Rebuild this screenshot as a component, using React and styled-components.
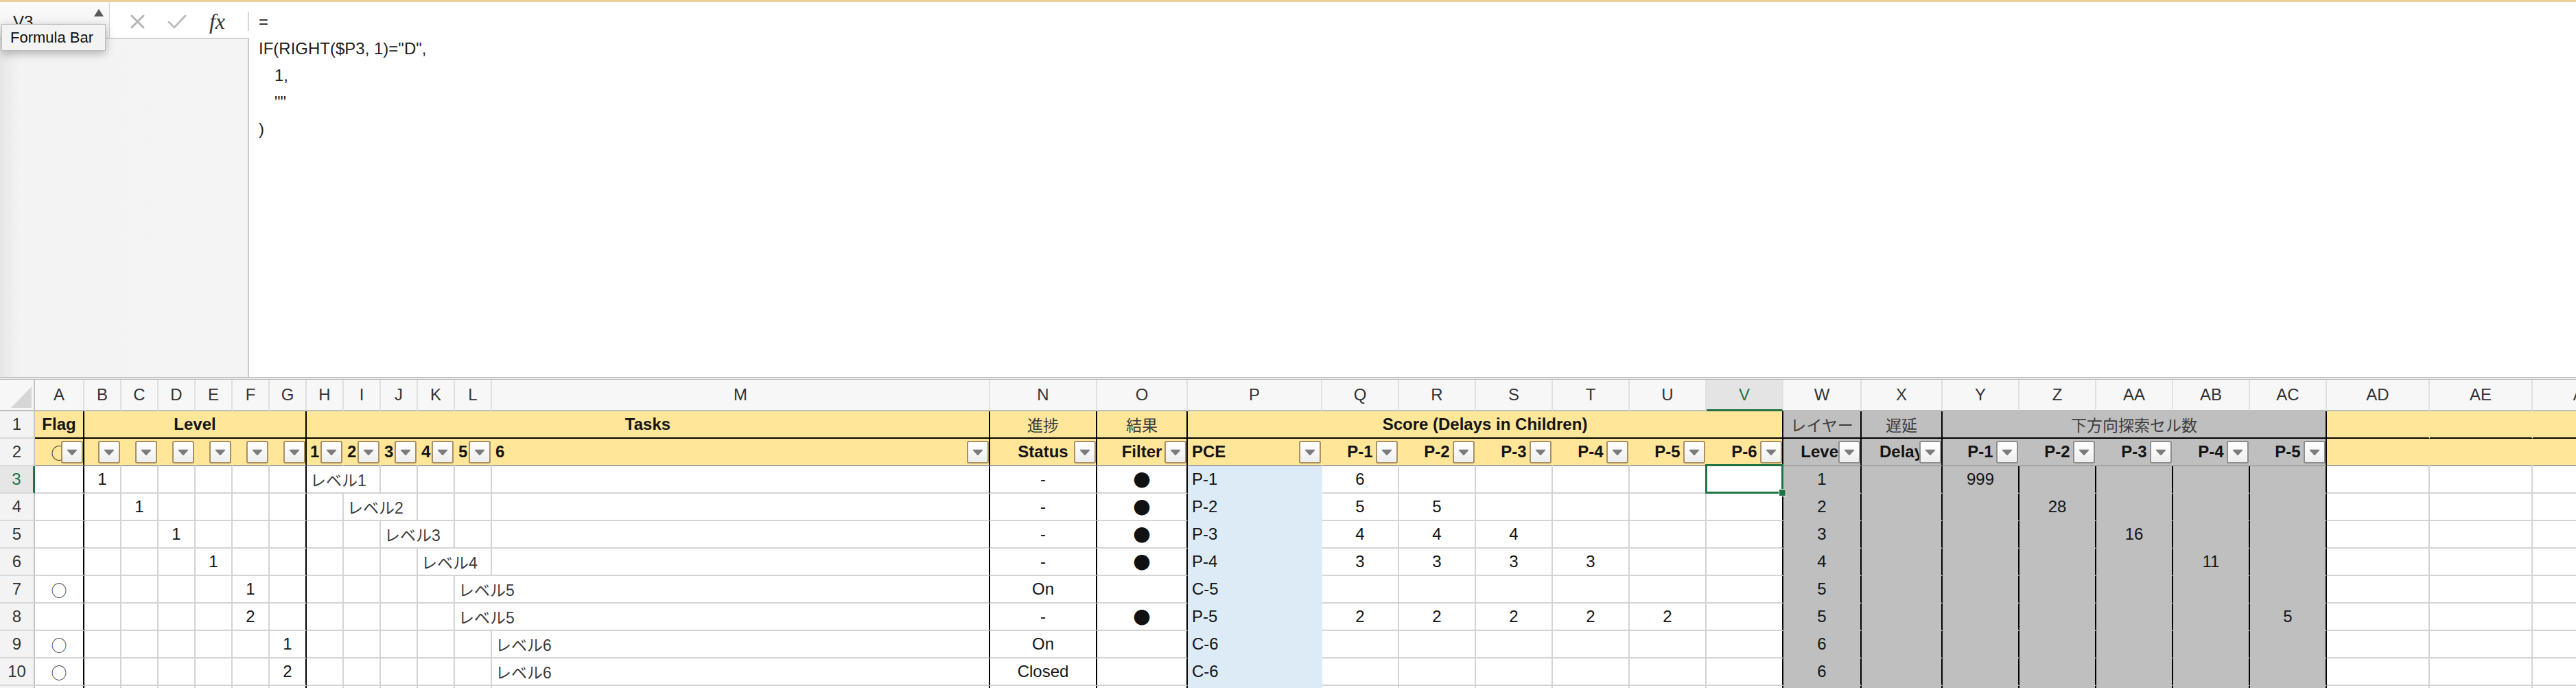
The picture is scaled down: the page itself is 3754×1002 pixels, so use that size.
import React from 'react';
import styled, { createGlobalStyle } from 'styled-components';

const YELLOW = '#ffe699';
const GRAY = '#bfbfbf';
const BLUE = '#ddebf7';
const WHITE = '#ffffff';
const GRID = '#d4d4d4';
const BLACK = '#000000';
const GREEN = '#217346';

const GlobalStyle = createGlobalStyle`
  html, body { margin: 0; padding: 0; background: #fff; }
  body {
    font-family: "Liberation Sans", "Noto Sans CJK JP", sans-serif;
    overflow: hidden;
  }
  * { box-sizing: border-box; }
`;

const Page = styled.div`
  width: 3754px;
  height: 1002px;
  overflow: hidden;
  display: flex;
  flex-direction: column;
  border-top: 3px solid #e9cf9c;
`;

/* ---------- formula bar ---------- */

const FormulaBar = styled.div`
  position: relative;
  display: flex;
  height: 546px;
  flex-shrink: 0;
`;

const LeftPane = styled.div`
  width: 363px;
  display: flex;
  flex-direction: column;
`;

const NameRow = styled.div`
  height: 54px;
  display: flex;
  border-bottom: 2px solid #d2d2d2;
`;

const NameBox = styled.div`
  width: 171px;
  display: flex;
  justify-content: space-between;
  padding: 6px 8px 0 19px;
  background: linear-gradient(#fbfbfb, #f0f0f0);
  border-right: 1px solid #d6d6d6;
  font-size: 24px;
  color: #222;
  align-items: center;
`;

const Spinner = styled.div`
  display: flex;
  flex-direction: column;
  align-self: flex-start;
  padding-top: 4px;
  gap: 12px;
`;

const Tools = styled.div`
  flex: 1;
  display: flex;
  align-items: center;
  padding: 4px 0 0 30px;
  gap: 33px;
  background: #fff;
`;

const FxLabel = styled.span`
  font-family: "Liberation Serif", serif;
  font-style: italic;
  font-size: 32px;
  color: #333;
  line-height: 1;
`;

const ToolDivider = styled.span`
  margin-left: auto;
  width: 2px;
  height: 28px;
  background: #d6d6d6;
`;

const SidePanel = styled.div`
  flex: 1;
  background: linear-gradient(to right, #e6e6e6, #f3f3f3 28px, #f4f4f4);
  border-right: 2px solid #c8c8c8;
`;

const FormulaText = styled.div`
  flex: 1;
  background: #fff;
  padding: 9px 0 0 14px;
  font-size: 24px;
  color: #222;
`;

const FormulaLine = styled.div`
  height: 39px;
  line-height: 39px;
  padding-left: ${(p) => p.$indent * 23}px;
  white-space: pre;
`;

const Tooltip = styled.div`
  position: absolute;
  left: 2px;
  top: 32px;
  width: 152px;
  height: 39px;
  padding-left: 12px;
  display: flex;
  align-items: center;
  background: #f3f3f3;
  border: 1px solid #bdbdbd;
  box-shadow: 0 4px 12px rgba(0, 0, 0, 0.28);
  font-size: 22px;
  color: #111;
  z-index: 5;
`;

const Splitter = styled.div`
  height: 4px;
  flex-shrink: 0;
  background: #ececec;
  border-top: 1px solid #b4b4b4;
  border-bottom: 1px solid #b4b4b4;
`;

/* ---------- sheet ---------- */

const COLS = [
  ['A', 72], ['B', 54], ['C', 54], ['D', 54], ['E', 54], ['F', 54], ['G', 54],
  ['H', 54], ['I', 54], ['J', 54], ['K', 54], ['L', 54], ['M', 726], ['N', 156],
  ['O', 132], ['P', 196], ['Q', 112], ['R', 112], ['S', 112], ['T', 112],
  ['U', 112], ['V', 112], ['W', 114], ['X', 118], ['Y', 112], ['Z', 112],
  ['AA', 112], ['AB', 112], ['AC', 112], ['AD', 150], ['AE', 150], ['AF', 150],
].map(([key, w]) => ({ key, w }));

const INDEX = Object.fromEntries(COLS.map((c, i) => [c.key, i]));
const isGrayCol = (k) => INDEX[k] >= INDEX.W && INDEX[k] <= INDEX.AC;
const TASK_SPAN = new Set(['H', 'I', 'J', 'K', 'L']);

const BLACK_HEAD = new Set(['A', 'G', 'M', 'N', 'O', 'V', 'W', 'X', 'AC']);
const BLACK_DATA = new Set(['A', 'G', 'M', 'N', 'O', 'V', 'W', 'X', 'Y', 'Z', 'AA', 'AB', 'AC']);

const Sheet = styled.div`
  display: grid;
  grid-template-columns: 51px ${COLS.map((c) => `${c.w}px`).join(' ')};
  grid-template-rows: 46px;
  grid-auto-rows: 40px;
  width: max-content;
`;

const Corner = styled.div`
  background: #f7f7f7;
  border-right: 2px solid #c4c4c4;
  border-bottom: 2px solid #bdbdbd;
  display: flex;
  align-items: flex-end;
  justify-content: flex-end;
  padding: 0 3px 3px 0;
`;

const ColHead = styled.div`
  background: ${(p) => (p.$active ? '#e4e4e4' : '#f7f7f7')};
  border-right: 2px solid #e0e0e0;
  border-bottom: ${(p) => (p.$active ? `3px solid ${GREEN}` : '2px solid #bdbdbd')};
  color: ${(p) => (p.$active ? GREEN : '#333')};
  font-size: 24px;
  display: flex;
  align-items: center;
  justify-content: center;
  white-space: nowrap;
  overflow: hidden;
`;

const RowHead = styled.div`
  background: ${(p) => (p.$active ? '#e6e6e6' : '#f3f3f3')};
  border-right: ${(p) => (p.$active ? `3px solid ${GREEN}` : '2px solid #c4c4c4')};
  border-bottom: 2px solid #d9d9d9;
  color: ${(p) => (p.$active ? GREEN : '#333')};
  font-size: 24px;
  display: flex;
  align-items: center;
  justify-content: center;
`;

const Cell = styled.div`
  position: relative;
  grid-column: span ${(p) => p.$span || 1};
  background: ${(p) => p.$fill};
  border-right: 2px solid ${(p) => p.$rc};
  border-bottom: 2px solid ${(p) => p.$bc};
  display: flex;
  align-items: center;
  justify-content: ${(p) => (p.$left ? 'flex-start' : 'center')};
  padding-left: ${(p) => (p.$left ? p.$pad || 5 : 0)}px;
  font-size: ${(p) => (p.$jp ? 23 : 24)}px;
  font-weight: ${(p) => (p.$bold ? 700 : 400)};
  color: ${(p) => (p.$jp ? '#3c3c3c' : '#141414')};
  white-space: nowrap;
  overflow: ${(p) => (p.$open ? 'visible' : 'hidden')};
`;

const Glyph = styled.span`
  font-family: "Noto Sans CJK JP", sans-serif;
  font-size: ${(p) => p.$size}px;
  line-height: 1;
  color: #111;
`;

const FilterBtn = styled.span`
  position: absolute;
  right: 0;
  top: 3px;
  width: 32px;
  height: 33px;
  border: 2px solid ${(p) => (p.$tone === 'gray' ? '#8e8e8e' : '#a89062')};
  border-radius: 3px;
  background: linear-gradient(#ffffff, #eeeeee);
  display: flex;
  align-items: center;
  justify-content: center;
`;

const Selection = styled.span`
  position: absolute;
  top: -3px;
  left: -2px;
  right: -2px;
  bottom: -2px;
  border: 3px solid ${GREEN};
  z-index: 3;
  pointer-events: none;
`;

const FillHandle = styled.span`
  position: absolute;
  right: -7px;
  bottom: -7px;
  width: 11px;
  height: 11px;
  background: ${GREEN};
  border: 1px solid #fff;
`;

const Triangle = () => (
  <svg width="16" height="10" viewBox="0 0 16 10">
    <path d="M1.5 1.5 H14.5 L8 8.5 Z" fill="#7b7b7b" stroke="#7b7b7b" strokeWidth="1.5" strokeLinejoin="round" />
  </svg>
);

const Filter = ({ tone }) => (
  <FilterBtn $tone={tone}>
    <Triangle />
  </FilterBtn>
);

const HEAD1 = [
  { from: 'A', to: 'A', text: 'Flag', bold: true },
  { from: 'B', to: 'G', text: 'Level', bold: true },
  { from: 'H', to: 'M', text: 'Tasks', bold: true },
  { from: 'N', to: 'N', text: '進捗', jp: true },
  { from: 'O', to: 'O', text: '結果', jp: true },
  { from: 'P', to: 'V', text: 'Score (Delays in Children)', bold: true },
  { from: 'W', to: 'W', text: 'レイヤー', jp: true },
  { from: 'X', to: 'X', text: '遅延', jp: true },
  { from: 'Y', to: 'AC', text: '下方向探索セル数', jp: true },
  { from: 'AD', to: 'AD' },
  { from: 'AE', to: 'AE' },
  { from: 'AF', to: 'AF' },
];

const HEAD2 = {
  A: { text: '◯', glyph: true },
  B: {}, C: {}, D: {}, E: {}, F: {}, G: {},
  H: { text: '1', left: true }, I: { text: '2', left: true }, J: { text: '3', left: true },
  K: { text: '4', left: true }, L: { text: '5', left: true }, M: { text: '6', left: true },
  N: { text: 'Status' }, O: { text: 'Filter' }, P: { text: 'PCE', left: true, pad: 6 },
  Q: { text: 'P-1' }, R: { text: 'P-2' }, S: { text: 'P-3' }, T: { text: 'P-4' },
  U: { text: 'P-5' }, V: { text: 'P-6' }, W: { text: 'Level' }, X: { text: 'Delay' },
  Y: { text: 'P-1' }, Z: { text: 'P-2' }, AA: { text: 'P-3' }, AB: { text: 'P-4' }, AC: { text: 'P-5' },
};

// the last row only shows its top edge at the bottom of the window, so it has no label
const ROWS = [
  { n: 3, B: '1', H: 'レベル1', N: '-', O: '●', P: 'P-1', Q: '6', W: '1', Y: '999' },
  { n: 4, C: '1', I: 'レベル2', N: '-', O: '●', P: 'P-2', Q: '5', R: '5', W: '2', Z: '28' },
  { n: 5, D: '1', J: 'レベル3', N: '-', O: '●', P: 'P-3', Q: '4', R: '4', S: '4', W: '3', AA: '16' },
  { n: 6, E: '1', K: 'レベル4', N: '-', O: '●', P: 'P-4', Q: '3', R: '3', S: '3', T: '3', W: '4', AB: '11' },
  { n: 7, A: '◯', F: '1', L: 'レベル5', N: 'On', P: 'C-5', W: '5' },
  { n: 8, F: '2', L: 'レベル5', N: '-', O: '●', P: 'P-5', Q: '2', R: '2', S: '2', T: '2', U: '2', W: '5', AC: '5' },
  { n: 9, A: '◯', G: '1', M: 'レベル6', N: 'On', P: 'C-6', W: '6' },
  { n: 10, A: '◯', G: '2', M: 'レベル6', N: 'Closed', P: 'C-6', W: '6' },
  { n: 11, hideLabel: true },
];

const headFill = (k) => (isGrayCol(k) ? GRAY : YELLOW);
const dataFill = (k) => (k === 'P' ? BLUE : isGrayCol(k) ? GRAY : WHITE);
const edge = (k, fill, blacks) => (blacks.has(k) ? BLACK : fill === WHITE ? GRID : fill);

const renderValue = (v) => {
  if (v === '●') return <Glyph $size={25}>●</Glyph>;
  if (v === '◯') return <Glyph $size={22}>◯</Glyph>;
  return v;
};

const HeaderRow1 = () => (
  <>
    <RowHead>1</RowHead>
    {HEAD1.map((h) => {
      const fill = headFill(h.from);
      return (
        <Cell
          key={h.from}
          $span={INDEX[h.to] - INDEX[h.from] + 1}
          $fill={fill}
          $rc={edge(h.to, fill, BLACK_HEAD)}
          $bc={BLACK}
          $bold={h.bold}
          $jp={h.jp}
        >
          {h.text}
        </Cell>
      );
    })}
  </>
);

const HeaderRow2 = () => (
  <>
    <RowHead>2</RowHead>
    {COLS.map(({ key }) => {
      const fill = headFill(key);
      const h = HEAD2[key];
      return (
        <Cell
          key={key}
          $fill={fill}
          $rc={edge(key, fill, BLACK_HEAD)}
          $bc="#a3a3a3"
          $bold
          $left={h && h.left}
          $pad={h && h.pad}
        >
          {h && h.text && (h.glyph ? renderValue(h.text) : h.text)}
          {h && <Filter tone={isGrayCol(key) ? 'gray' : 'yellow'} />}
        </Cell>
      );
    })}
  </>
);

const DataRow = ({ row }) => {
  const cells = [];
  for (let i = 0; i < COLS.length; i += 1) {
    const { key } = COLS[i];
    const value = row[key];
    const task = value && INDEX[key] >= INDEX.H && INDEX[key] <= INDEX.M;
    const span = task && TASK_SPAN.has(key) ? 2 : 1;
    const last = COLS[i + span - 1].key;
    const fill = dataFill(key);
    const selected = row.n === 3 && key === 'V';
    cells.push(
      <Cell
        key={key}
        $span={span}
        $fill={fill}
        $rc={edge(last, fill, BLACK_DATA)}
        $bc={fill === WHITE ? GRID : fill}
        $left={task || key === 'P'}
        $pad={key === 'P' ? 6 : 5}
        $jp={task}
        $open={selected}
      >
        {value && renderValue(value)}
        {selected && (
          <Selection>
            <FillHandle />
          </Selection>
        )}
      </Cell>
    );
    i += span - 1;
  }
  return (
    <>
      <RowHead $active={row.n === 3}>{row.hideLabel ? null : row.n}</RowHead>
      {cells}
    </>
  );
};

const FORMULA = [
  { t: '=', i: 0 },
  { t: 'IF(RIGHT($P3, 1)="D",', i: 0 },
  { t: '1,', i: 1 },
  { t: '""', i: 1 },
  { t: ')', i: 0 },
];

const App = () => (
  <Page>
    <GlobalStyle />
    <FormulaBar>
      <LeftPane>
        <NameRow>
          <NameBox>
            <span>V3</span>
            <Spinner>
              <svg width="14" height="11" viewBox="0 0 14 11">
                <path d="M7 0 L14 11 H0 Z" fill="#5a5a5a" />
              </svg>
              <svg width="14" height="11" viewBox="0 0 14 11">
                <path d="M0 0 H14 L7 11 Z" fill="#5a5a5a" />
              </svg>
            </Spinner>
          </NameBox>
          <Tools>
            <svg width="21" height="21" viewBox="0 0 21 21">
              <path d="M2 2 L19 19 M19 2 L2 19" stroke="#b4b4b4" strokeWidth="3" strokeLinecap="round" />
            </svg>
            <svg width="28" height="21" viewBox="0 0 28 21">
              <path d="M2 11 L10 19 L26 2" fill="none" stroke="#bdbdbd" strokeWidth="3" strokeLinecap="round" strokeLinejoin="round" />
            </svg>
            <FxLabel>fx</FxLabel>
            <ToolDivider />
          </Tools>
        </NameRow>
        <SidePanel />
      </LeftPane>
      <FormulaText>
        {FORMULA.map((l, idx) => (
          <FormulaLine key={idx} $indent={l.i}>
            {l.t}
          </FormulaLine>
        ))}
      </FormulaText>
      <Tooltip>Formula Bar</Tooltip>
    </FormulaBar>
    <Splitter />
    <Sheet>
      <Corner>
        <svg width="30" height="31" viewBox="0 0 30 31">
          <path d="M30 0 V31 H0 Z" fill="#d6d6d6" />
        </svg>
      </Corner>
      {COLS.map(({ key }) => (
        <ColHead key={key} $active={key === 'V'}>
          {key}
        </ColHead>
      ))}
      <HeaderRow1 />
      <HeaderRow2 />
      {ROWS.map((row) => (
        <DataRow key={row.n} row={row} />
      ))}
    </Sheet>
  </Page>
);

export default App;
